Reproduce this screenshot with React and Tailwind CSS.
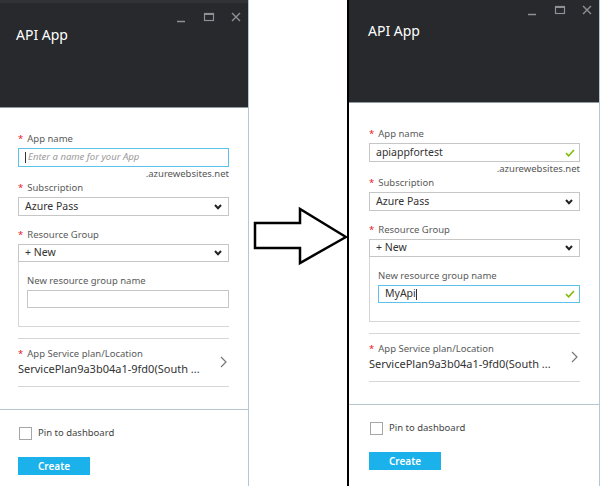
import React from 'react';

const Star = () => <span className="text-[#e81123] mr-[4px]">*</span>;

const Label = ({ children, required, className = '' }) => (
    <div className={`h-[14px] leading-[14px] text-[9.5px] text-[#5a5a5a] ${className}`}>
        {required && <Star />}
        {children}
    </div>
);

const Check = () => (
    <svg width="10" height="8" viewBox="0 0 10 8" fill="none">
        <polyline points="1,4 3.6,6.8 9,1" stroke="#7fba00" strokeWidth="1.5" />
    </svg>
);

const ChevronDown = () => (
    <svg width="8" height="6" viewBox="0 0 8 6" fill="none">
        <path d="M1 1 L4 4.2 L7 1" stroke="#222" strokeWidth="2" />
    </svg>
);

const WindowControls = ({ right }) => (
    <svg
        className={right ? 'absolute top-[4px] right-[7px]' : 'absolute top-[8px] right-[7px]'}
        width="66"
        height="14"
        viewBox="0 0 66 14"
        fill="none"
    >
        <line x1="2" y1="10.5" x2="10" y2="10.5" stroke="#8d9094" strokeWidth="1.5" />
        <rect x="29.5" y="2.5" width="9" height="7" stroke="#8d9094" strokeWidth="1.2" />
        <line x1="29.5" y1="3" x2="38.5" y2="3" stroke="#8d9094" strokeWidth="2" />
        <path d="M57 2 L65 10 M65 2 L57 10" stroke="#8d9094" strokeWidth="1.4" />
    </svg>
);

const Panel = ({ right }) => {
    return (
        <div className="flex flex-col h-full bg-white">
            {/* Header */}
            <div
                className={
                    right
                        ? 'relative h-[103px] shrink-0 bg-[#27292d] border-b border-[#8e9ba5]'
                        : 'relative h-[108px] shrink-0 bg-[#27292d] border-b border-[#8e9ba5] border-t-[3px] border-t-[#303236]'
                }
            >
                <div
                    className={
                        right
                            ? 'pl-[19px] pt-[22px] text-[14px] leading-[18px] text-white'
                            : 'pl-[16px] pt-[23px] text-[14px] leading-[18px] text-white'
                    }
                >
                    API App
                </div>
                <WindowControls right={right} />
            </div>

            {/* Form */}
            <div className={right ? 'pl-[20px] pr-[19px] pt-[24px]' : 'pl-[18px] pr-[19px] pt-[24px]'}>
                <Label required>App name</Label>
                {right ? (
                    <div className="mt-[2px] h-[19px] border border-[#c6c6c6] flex items-center justify-between pl-[6px] pr-[4px] text-[10.5px] text-[#333]">
                        <span>apiappfortest</span>
                        <Check />
                    </div>
                ) : (
                    <div className="mt-[2px] h-[19px] border border-[#5cc2e9] flex items-center pl-[6px] text-[9.5px] italic text-[#9a9a9a]">
                        <span className="w-px h-[11px] bg-[#333] mr-[2px]" />
                        Enter a name for your App
                    </div>
                )}
                <div className="h-[14px] leading-[14px] text-right text-[9.5px] text-[#555]">.azurewebsites.net</div>

                <Label required>Subscription</Label>
                <div className="mt-[2px] h-[19px] border border-[#c6c6c6] flex items-center justify-between pl-[6px] pr-[6px] text-[10.5px] text-[#333]">
                    <span>Azure Pass</span>
                    <ChevronDown />
                </div>

                <Label required className="mt-[12px]">Resource Group</Label>
                <div className="mt-[2px] h-[18px] border border-[#c6c6c6] flex items-center justify-between pl-[6px] pr-[6px] text-[10.5px] text-[#333]">
                    <span>+ New</span>
                    <ChevronDown />
                </div>

                {/* New resource group sub box */}
                <div className="border-l border-b border-[#d6d6d6] pl-[8px] pt-[12px] pb-[18px]">
                    <Label>New resource group name</Label>
                    {right ? (
                        <div className="mt-[2px] h-[18px] border border-[#5cc2e9] flex items-center justify-between pl-[6px] pr-[4px] text-[10.5px] text-[#333]">
                            <span className="flex items-center">
                                MyApi
                                <span className="w-px h-[11px] bg-[#333]" />
                            </span>
                            <Check />
                        </div>
                    ) : (
                        <div className="mt-[2px] h-[18px] border border-[#c6c6c6]" />
                    )}
                </div>

                <div className="mt-[11px] border-t border-[#d6d6d6]" />

                <div className="mt-[8px] flex items-center justify-between">
                    <div>
                        <Label required>App Service plan/Location</Label>
                        <div className="h-[16px] leading-[16px] text-[11px] text-[#333] whitespace-nowrap">
                            ServicePlan9a3b04a1-9fd0(South ...
                        </div>
                    </div>
                    <svg className="mr-[2px]" width="7" height="12" viewBox="0 0 7 12" fill="none">
                        <path d="M1 1 L6 6 L1 11" stroke="#777" strokeWidth="1.2" />
                    </svg>
                </div>

                <div className="mt-[9px] border-t border-[#d6d6d6]" />
            </div>

            <div className="mt-[22px] border-t border-[#b8c6cf]" />

            <div className={right ? 'pl-[21px] pt-[16px]' : 'pl-[19px] pt-[16px]'}>
                <div className="flex items-center gap-[6px]">
                    <div className="w-[13px] h-[13px] border border-[#a6a6a6] bg-white" />
                    <span className="text-[9.5px] text-[#444]">Pin to dashboard</span>
                </div>
            </div>

            <div className={right ? 'pl-[20px] pt-[17px]' : 'pl-[18px] pt-[17px]'}>
                <button className="w-[72px] h-[18px] bg-[#1bb1ea] text-white text-[10px] font-semibold flex items-center justify-center">
                    Create
                </button>
            </div>
        </div>
    );
};

const App = () => {
    return (
        <div className="w-[602px] h-[486px] bg-white flex overflow-hidden font-['Noto_Sans',sans-serif]">
            {/* Before */}
            <div className="w-[249px] h-full border-r border-[#b5c7d1] shrink-0">
                <Panel />
            </div>

            {/* Arrow */}
            <div className="w-[98px] shrink-0">
                <svg className="mt-[206px]" width="98" height="60" viewBox="0 0 98 60" fill="none">
                    <polygon
                        points="6,17 51,17 51,3 97,31 51,57 51,42 6,42"
                        fill="white"
                        stroke="black"
                        strokeWidth="2.5"
                        strokeLinejoin="miter"
                    />
                </svg>
            </div>

            {/* After */}
            <div className="w-[253px] h-full border-l-2 border-black shrink-0">
                <div className="h-full border-r border-[#b5c7d1]">
                    <Panel right />
                </div>
            </div>
        </div>
    );
};

export default App;
